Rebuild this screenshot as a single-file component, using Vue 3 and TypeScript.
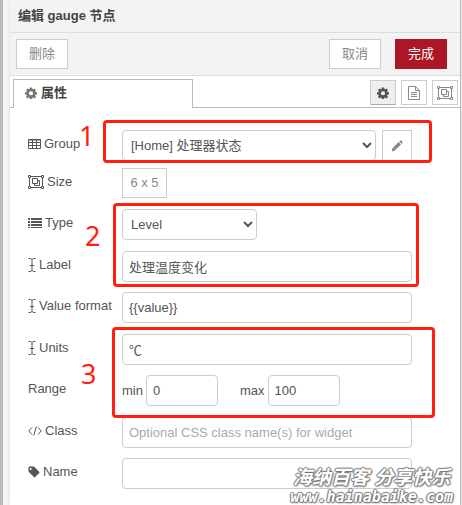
<script setup lang="ts">
import { ref } from 'vue'

const group = ref('home')
const type = ref('level')
const label = ref('处理温度变化')
const format = ref('{{value}}')
const units = ref('℃')
const min = ref('0')
const max = ref('100')
const cssClass = ref('')
const name = ref('')
</script>

<template>
  <div class="workspace">
    <main class="tray">
      <header class="tray-header">编辑 gauge 节点</header>
      <div class="toolbar">
        <button class="btn delete" type="button">删除</button>
        <button class="btn cancel" type="button">取消</button>
        <button class="btn primary" type="button">完成</button>
      </div>

      <nav class="tabs">
        <a class="tab" href="#properties">
          <svg class="gear" viewBox="0 0 16 16"><path fill-rule="evenodd" d="M6.500.5h3l.4 2.200 1 .4 1.800-1.200 2 2-1.200 1.800.4 1 2.100.3v3l-2.100.4-.4 1 1.200 1.800-2 2-1.800-1.200-1 .4-.4 2.100h-3l-.4-2.100-1-.4-1.800 1.200-2-2 1.200-1.800-.4-1L0 10V7l2.100-.3.4-1-1.200-1.800 2-2 1.800 1.200 1-.4zM8 5.500a2.800 2.800 0 1 0 0 5.600 2.800 2.800 0 0 0 0-5.600z" /></svg>
          <span>属性</span>
        </a>
        <div class="tab-tools">
          <button class="tool active" type="button" aria-label="属性">
            <svg class="gear" viewBox="0 0 16 16"><path fill-rule="evenodd" d="M6.500.5h3l.4 2.200 1 .4 1.800-1.200 2 2-1.200 1.800.4 1 2.100.3v3l-2.100.4-.4 1 1.200 1.800-2 2-1.800-1.200-1 .4-.4 2.100h-3l-.4-2.100-1-.4-1.800 1.200-2-2 1.200-1.800-.4-1L0 10V7l2.100-.3.4-1-1.200-1.800 2-2 1.800 1.200 1-.4zM8 5.500a2.800 2.800 0 1 0 0 5.600 2.800 2.800 0 0 0 0-5.600z" /></svg>
          </button>
          <button class="tool" type="button" aria-label="描述">
            <svg class="doc line" viewBox="0 0 12 14"><path d="M.5.5h7l4 4v9H.5zM7.500.5v4h4M3 6.500h6M3 8.500h6M3 10.500h6" /></svg>
          </button>
          <button class="tool" type="button" aria-label="外观">
            <svg class="frame line" viewBox="0 0 16 14"><path d="M2 1.500h12M2 12.500h12M1.500 2v10M14.500 2v10M.5.5h2v2h-2zM13.500.5h2v2h-2zM.5 11.500h2v2h-2zM13.500 11.500h2v2h-2zM4.500 3.500h5v5h-5zM9.500 5.500h2v5h-5v-2" /></svg>
          </button>
        </div>
      </nav>

      <form class="form" @submit.prevent>
        <section class="section tight">
          <div class="row">
            <label for="group">
              <svg class="table line" viewBox="0 0 13 12"><path d="M.5 1.500h12v9H.5zM.5 2h12M.5 4.500h12M.5 7.500h12M4.500 1v10M8.500 1v10" /></svg>
              Group
            </label>
            <div class="field pair">
              <select id="group" v-model="group"><option value="home">[Home] 处理器状态</option></select>
              <button class="edit" type="button" aria-label="编辑">
                <svg class="pencil" viewBox="0 0 12 12"><path d="M8.300 1.200 9 .7c.6-.4 1.200-.3 1.700.2l.6.7c.4.5.4 1 0 1.500l-.8.8zM7.600 1.900l2.400 2.500-6.500 6.300L.8 11.500l.5-3z" /></svg>
              </button>
            </div>
          </div>
          <div class="row">
            <label for="size">
              <svg class="frame line" viewBox="0 0 16 14"><path d="M2 1.500h12M2 12.500h12M1.500 2v10M14.500 2v10M.5.5h2v2h-2zM13.500.5h2v2h-2zM.5 11.500h2v2h-2zM13.500 11.500h2v2h-2zM4.500 3.500h5v5h-5zM9.500 5.500h2v5h-5v-2" /></svg>
              Size
            </label>
            <button id="size" class="size" type="button">6 x 5</button>
          </div>
        </section>

        <section class="section">
          <div class="row">
            <label for="type">
              <svg class="list" viewBox="0 0 14 12"><path d="M0 1h2v2H0zM3 1h11v2H3zM0 4h2v2H0zM3 4h11v2H3zM0 7h2v2H0zM3 7h11v2H3zM0 10h2v1H0zM3 10h11v1H3z" /></svg>
              Type
            </label>
            <select id="type" v-model="type" class="short"><option value="level">Level</option></select>
          </div>
        </section>

        <section class="section">
          <div class="row">
            <label for="label">
              <svg class="cursor line" viewBox="0 0 8 14"><path d="M.5.5h2l1.500 1 1.500-1h2M.5 13.500h2l1.500-1 1.500 1h2M4 1.500v11M2 7.500h4" /></svg>
              Label
            </label>
            <input id="label" v-model="label" class="field" type="text" />
          </div>
          <div class="row">
            <label for="format">
              <svg class="cursor line" viewBox="0 0 8 14"><path d="M.5.5h2l1.500 1 1.500-1h2M.5 13.500h2l1.500-1 1.500 1h2M4 1.500v11M2 7.500h4" /></svg>
              Value format
            </label>
            <input id="format" v-model="format" class="field" type="text" />
          </div>
        </section>

        <section class="section">
          <div class="row">
            <label for="units">
              <svg class="cursor line" viewBox="0 0 8 14"><path d="M.5.5h2l1.500 1 1.500-1h2M.5 13.500h2l1.500-1 1.500 1h2M4 1.500v11M2 7.500h4" /></svg>
              Units
            </label>
            <input id="units" v-model="units" class="field" type="text" />
          </div>
          <div class="row">
            <label for="min">Range</label>
            <div class="range">
              <span class="bound"><label for="min">min</label><input id="min" v-model="min" type="text" /></span>
              <span class="bound"><label for="max">max</label><input id="max" v-model="max" type="text" /></span>
            </div>
          </div>
        </section>

        <section class="section">
          <div class="row">
            <label for="class">
              <svg class="code line" viewBox="0 0 14 10"><path d="M4 1.500.8 5 4 8.500M10 1.500 13.200 5 10 8.500M8.300.5 5.700 9.500" /></svg>
              Class
            </label>
            <input id="class" v-model="cssClass" class="field" type="text" placeholder="Optional CSS class name(s) for widget" />
          </div>
          <div class="row">
            <label for="name">
              <svg class="tag" viewBox="0 0 12 12"><path fill-rule="evenodd" d="M.5 1.500Q.5.600 1.500.6h3.800q.7 0 1.200.5l4.700 4.700q.6.700 0 1.300l-4 4q-.7.600-1.300 0L1.100 6.300q-.6-.5-.6-1.200zM2.700 1.900a1 1 0 1 0 0 2 1 1 0 0 0 0-2z" /></svg>
              Name
            </label>
            <input id="name" v-model="name" class="field" type="text" />
          </div>
        </section>
      </form>
    </main>

    <div class="mark box-one"></div>
    <div class="mark box-two"></div>
    <div class="mark box-three"></div>
    <span class="digit digit-one">1</span>
    <span class="digit digit-two">2</span>
    <span class="digit digit-three">3</span>
    <div class="watermark">
      <span class="wm-title">海纳百客 分享快乐</span>
      <span class="wm-url">www.hainabaike.com</span>
    </div>
  </div>
</template>

<style>
body {
  background: #f3f3f3;
}
</style>

<style scoped>
.workspace {
  position: relative;
  box-sizing: border-box;
  min-height: 100vh;
  display: flex;
  padding: 0 1px 0 3px;
  background: linear-gradient(90deg, #bbb 3px, #f3f3f3 3px);
  overflow: hidden;
  color: #555;
  font-family: "Liberation Sans", "Noto Sans CJK SC", sans-serif;
  font-size: 13px;
  line-height: 20px;
}
.tray {
  flex: 1;
  min-width: 0;
  margin-left: 7px;
  border-right: 1px solid #bbb;
  background: #fff;
  box-shadow: 0 0 3px #ddd;
}
.tray-header {
  height: 32px;
  padding-left: 8px;
  border-bottom: 1px solid #ddd;
  background: #f3f3f3;
  color: #444;
  font-weight: bold;
  line-height: 31px;
}
.toolbar {
  display: flex;
  align-items: center;
  height: 42px;
  padding: 0 13px 0 6px;
  border-bottom: 1px solid #ddd;
  background: #f3f3f3;
}
button,
input,
select {
  box-sizing: border-box;
  margin: 0;
  border: 1px solid #ccc;
  background: #fff;
  color: #555;
  font: inherit;
}
button {
  display: flex;
  align-items: center;
  justify-content: center;
  padding: 0;
  color: #888;
}
.btn {
  width: 52px;
  height: 30px;
}
.cancel {
  margin-left: auto;
}
.primary {
  margin-left: 14px;
  border-color: #ad1625;
  background: #ad1625;
  color: #fff;
}
.tabs {
  display: flex;
  align-items: flex-end;
  justify-content: space-between;
  height: 32px;
  padding-left: 3px;
  box-shadow: inset 0 -1px #bbb;
}
.tab {
  box-sizing: border-box;
  display: flex;
  align-items: center;
  gap: 4px;
  width: 180px;
  height: 29px;
  padding: 0 11px 3px;
  border: 1px solid #bbb;
  border-bottom: 0;
  background: #fff;
  color: #444;
  font-weight: bold;
  text-decoration: none;
}
.tab-tools {
  display: flex;
  align-self: flex-start;
  gap: 5px;
  padding: 4px 2px 0 0;
}
.tool {
  width: 26px;
  height: 25px;
}
.tool.active {
  border-bottom-color: #aaa;
  background: #efefef;
  color: #555;
}
.form {
  display: flex;
  flex-direction: column;
  gap: 11px;
  padding: 22px 48px 16px 18px;
}
.section {
  display: flex;
  flex-direction: column;
  gap: 10px;
}
.section.tight {
  gap: 7px;
}
.row {
  display: flex;
  align-items: center;
}
.row > label {
  display: flex;
  flex: none;
  align-items: center;
  gap: 3px;
  width: 94px;
  padding-bottom: 3px;
  white-space: nowrap;
}
input,
select {
  height: 31px;
  border-radius: 4px;
}
input {
  min-width: 0;
  padding: 0 6px;
}
input::placeholder {
  color: #aaa;
}
select {
  padding: 0 4px;
}
.field {
  flex: 1;
}
.pair {
  display: flex;
  gap: 6px;
}
.pair select {
  flex: 1;
  min-width: 0;
}
.edit {
  width: 30px;
  height: 31px;
}
.size {
  width: 45px;
  height: 30px;
}
.short {
  width: 135px;
}
.range {
  display: flex;
  gap: 22px;
}
.bound {
  display: flex;
  align-items: center;
  gap: 3px;
}
.bound input {
  width: 72px;
}
svg {
  flex: none;
  fill: currentColor;
}
.line {
  fill: none;
  stroke: currentColor;
}
.gear {
  width: 12px;
  height: 12px;
}
.tab .gear {
  color: #777;
}
.doc {
  width: 12px;
  height: 14px;
}
.frame {
  width: 16px;
  height: 14px;
}
.table {
  width: 13px;
  height: 12px;
}
.pencil,
.tag {
  width: 12px;
  height: 12px;
}
.list {
  width: 14px;
  height: 12px;
}
.cursor {
  width: 8px;
  height: 14px;
}
.code {
  width: 14px;
  height: 10px;
}
.mark {
  position: absolute;
  border: 3px solid #ff1e10;
  border-radius: 4px;
  box-sizing: border-box;
  pointer-events: none;
}
.box-one {
  left: 103px;
  top: 120px;
  width: 329px;
  height: 43px;
}
.box-two {
  left: 113px;
  top: 203px;
  width: 306px;
  height: 84px;
}
.box-three {
  left: 112px;
  top: 327px;
  width: 323px;
  height: 91px;
}
.digit {
  position: absolute;
  color: #ff1e10;
  font-family: "Noto Sans", sans-serif;
  font-size: 27px;
  line-height: 28px;
}
.digit-one {
  left: 79px;
  top: 122px;
}
.digit-two {
  left: 85px;
  top: 222px;
}
.digit-three {
  left: 81px;
  top: 360px;
}
.watermark {
  position: absolute;
  right: 9px;
  bottom: 0;
  display: flex;
  flex-direction: column;
  align-items: center;
  color: #fff;
  font-style: italic;
  font-weight: bold;
  white-space: nowrap;
  text-shadow: 1px 0 1px #777, -1px 0 1px #777, 0 1px 1px #777, 0 -1px 1px #777, 1px 1px 2px #888;
  pointer-events: none;
}
.wm-title {
  font-size: 19px;
  line-height: 22px;
}
.wm-url {
  font-family: "DejaVu Sans Mono", monospace;
  font-size: 15px;
  line-height: 16px;
}
</style>
